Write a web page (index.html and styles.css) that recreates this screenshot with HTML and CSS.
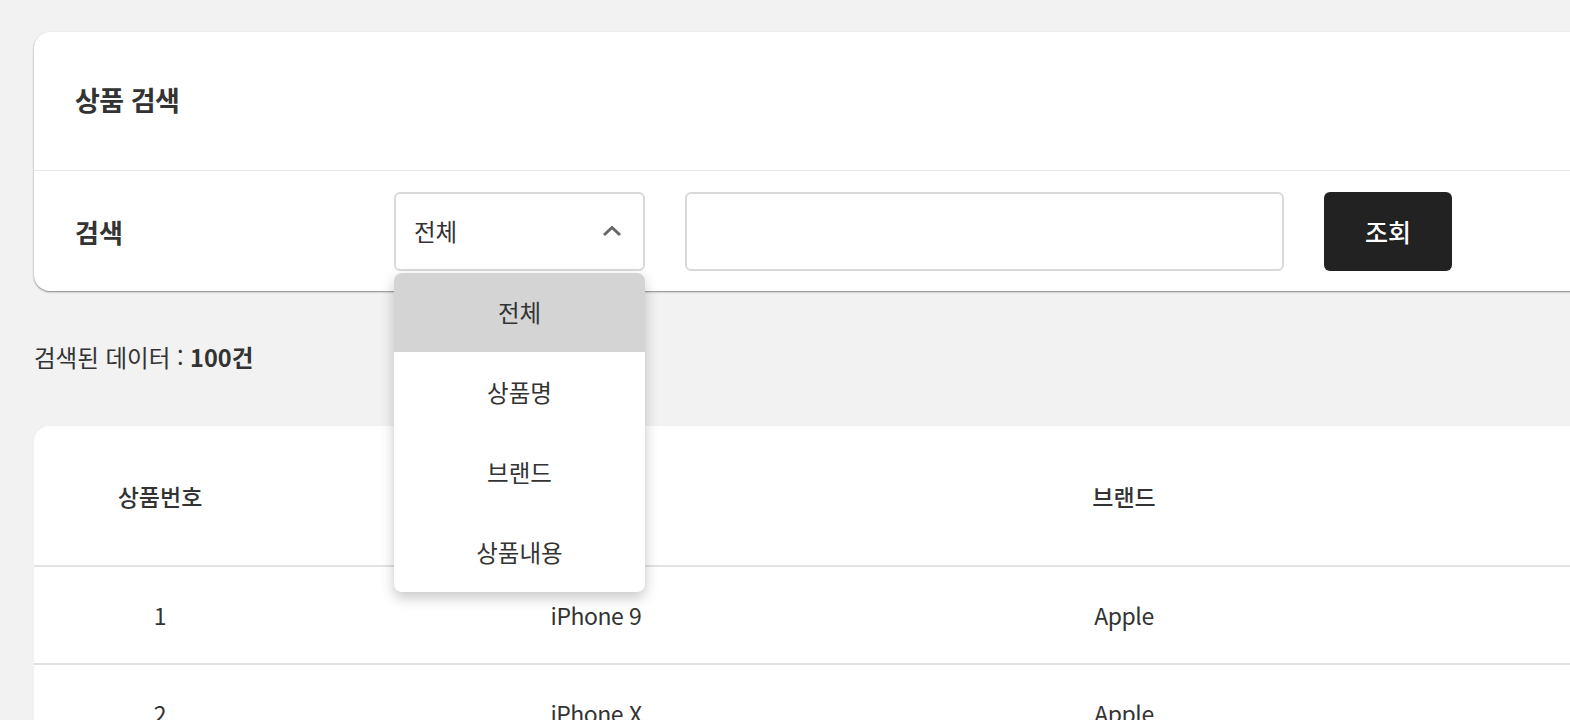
FILE: index.html
```html
<!DOCTYPE html>
<html lang="ko">
<head>
<meta charset="utf-8">
<title>상품 검색</title>
<link rel="stylesheet" href="styles.css">
</head>
<body>
<main class="page">
  <section class="card search-card">
    <header class="card-head">
      <h1 class="title">상품 검색</h1>
    </header>
    <div class="search-row">
      <span class="label">검색</span>
      <div class="select-wrap">
        <button class="select" type="button">
          <span>전체</span>
          <svg class="chev" width="20" height="14" viewBox="0 0 20 14"><path d="M2 11 L10 3.5 L18 11" fill="none" stroke="#666" stroke-width="3"/></svg>
        </button>
        <ul class="menu">
          <li class="opt active">전체</li>
          <li class="opt">상품명</li>
          <li class="opt">브랜드</li>
          <li class="opt">상품내용</li>
        </ul>
      </div>
      <input class="text-input" type="text">
      <button class="btn" type="button">조회</button>
    </div>
  </section>

  <p class="count">검색된 데이터 : <b>100건</b></p>

  <section class="card table-card">
    <table class="table">
      <colgroup>
        <col class="c1"><col class="c2"><col class="c3"><col class="c4">
      </colgroup>
      <thead>
        <tr><th>상품번호</th><th>상품명</th><th>브랜드</th><th>상품내용</th></tr>
      </thead>
      <tbody>
        <tr><td>1</td><td>iPhone 9</td><td>Apple</td><td>An apple mobile which is nothing like apple</td></tr>
        <tr><td>2</td><td>iPhone X</td><td>Apple</td><td>SIM-Free, Model A19211 6.5-inch</td></tr>
        <tr><td>3</td><td>Samsung Universe 9</td><td>Samsung</td><td>Samsung's new variant which goes beyond</td></tr>
      </tbody>
    </table>
  </section>
</main>
</body>
</html>
```

FILE: styles.css
```css
html {
  overflow: hidden;
}
body {
  margin: 0;
  background: #f2f2f2;
  font-family: "Noto Sans CJK KR", "Noto Sans", sans-serif;
  color: #333;
}
.page {
  padding: 32px 0 0 34px;
  width: 2400px;
}
.card {
  background: #fff;
  border-radius: 16px;
  width: 2366px;
}
.search-card {
  box-shadow: 0 1px 2px rgba(0, 0, 0, 0.45);
}
.card-head {
  height: 138px;
  border-bottom: 1px solid #e6e6e6;
  display: flex;
  align-items: center;
  padding: 0 41px;
}
.title {
  margin: -4px 0 0;
  font-size: 27px;
  font-weight: 700;
  letter-spacing: -0.5px;
}
.search-row {
  height: 120px;
  display: flex;
  align-items: center;
  padding-left: 41px;
}
.label {
  width: 319px;
  font-size: 26px;
  font-weight: 700;
}
.select-wrap {
  position: relative;
  width: 251px;
  height: 79px;
  margin-right: 40px;
}
.select {
  width: 100%;
  height: 100%;
  box-sizing: border-box;
  border: 2px solid #d9d9d9;
  border-radius: 6px;
  background: #fff;
  display: flex;
  align-items: center;
  justify-content: space-between;
  padding: 0 21px 0 18px;
  font-family: inherit;
  font-size: 23.5px;
  color: #333;
}
.chev {
  display: block;
}
.menu {
  position: absolute;
  top: 81px;
  left: 0;
  width: 251px;
  margin: 0;
  padding: 0;
  list-style: none;
  background: #fff;
  border-radius: 8px;
  overflow: hidden;
  box-shadow: 0 6px 14px rgba(0, 0, 0, 0.22);
  z-index: 2;
}
.opt {
  height: 79.75px;
  display: flex;
  align-items: center;
  justify-content: center;
  font-size: 23.5px;
}
.opt.active {
  background: #d4d4d4;
}
.text-input {
  width: 599px;
  height: 79px;
  box-sizing: border-box;
  border: 2px solid #d9d9d9;
  border-radius: 6px;
  margin: 0 40px 0 0;
  font-family: inherit;
  font-size: 22px;
}
.btn {
  width: 128px;
  height: 79px;
  border: 0;
  border-radius: 6px;
  background: #222;
  color: #fff;
  font-family: inherit;
  font-size: 25px;
  font-weight: 500;
}
.count {
  margin: 50px 0 53px;
  font-size: 23.5px;
  line-height: 32px;
}
.count b {
  font-weight: 700;
}
.table {
  width: 100%;
  border-collapse: collapse;
  table-layout: fixed;
}
.c1 { width: 252px; }
.c2 { width: 620px; }
.c3 { width: 436px; }
.table th {
  height: 137px;
  font-size: 23px;
  font-weight: 500;
  border-bottom: 2px solid #e2e2e2;
}
.table td {
  height: 94px;
  text-align: center;
  font-size: 23px;
  font-weight: 400;
  border-bottom: 2px solid #e2e2e2;
  letter-spacing: -0.5px;
}
```
